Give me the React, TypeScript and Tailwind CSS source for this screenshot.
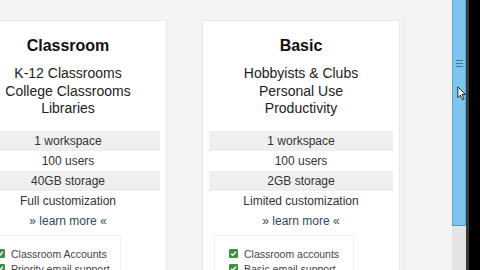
import React from 'react'

interface Plan {
  name: string
  audience: string[]
  features: string[]
  perks: string[]
}

const PLANS: Plan[] = [
  {
    name: 'Classroom',
    audience: ['K-12 Classrooms', 'College Classrooms', 'Libraries'],
    features: ['1 workspace', '100 users', '40GB storage', 'Full customization'],
    perks: ['Classroom Accounts', 'Priority email support'],
  },
  {
    name: 'Basic',
    audience: ['Hobbyists & Clubs', 'Personal Use', 'Productivity'],
    features: ['1 workspace', '100 users', '2GB storage', 'Limited customization'],
    perks: ['Classroom accounts', 'Basic email support'],
  },
]

function Check() {
  return (
    <svg viewBox="0 0 10 10" className="w-[9px] h-[9px] shrink-0">
      <rect x="0" y="0" width="10" height="10" rx="1.5" fill="#3f8f3f" />
      <path d="M2.3 5.2 L4.2 7 L7.8 3" fill="none" stroke="#fff" strokeWidth="1.6" />
    </svg>
  )
}

function PlanCard({ plan }: { plan: Plan }) {
  return (
    <div className="w-[198px] shrink-0 bg-white border border-[#e8e8e8] pt-[14px] px-[6px]">
      <h2 className="text-center text-[16px] leading-[22px] font-bold text-[#111]">{plan.name}</h2>
      <div className="mt-[8px] text-center text-[14px] leading-[17.5px] text-[#222]">
        {plan.audience.map((a) => (
          <div key={a}>{a}</div>
        ))}
      </div>
      <div className="mt-[13px] text-[12px] text-[#333]">
        {plan.features.map((f, i) => (
          <div
            key={f}
            className={`h-[20px] flex items-center justify-center ${i % 2 === 0 ? 'bg-[#efefef]' : ''}`}
          >
            {f}
          </div>
        ))}
        <div className="h-[21px] flex items-center justify-center text-[#34495e]">
          » learn more «
        </div>
      </div>
      <div className="mt-[3px] ml-[5px] w-[140px] border border-[#f1f1f1] pt-[13px] pl-[14px] pb-2 flex flex-col gap-[5px]">
        {plan.perks.map((p) => (
          <div key={p} className="flex items-center gap-[6px] text-[10.5px] leading-[10px] text-[#444]">
            <Check />
            <span>{p}</span>
          </div>
        ))}
      </div>
    </div>
  )
}

export default function App() {
  return (
    <div
      className="w-[480px] h-[270px] overflow-hidden flex bg-[#f4f4f4]"
      style={{ fontFamily: '"Liberation Sans", Arial, sans-serif' }}
    >
      {/* page */}
      <div className="w-[452px] h-full overflow-hidden">
        <div className="flex gap-[35px] ml-[-31px] mt-[20px]">
          {PLANS.map((p) => (
            <PlanCard key={p.name} plan={p} />
          ))}
          <div className="w-[2px] h-[260px] bg-[#ececec] ml-[-32px]" />
        </div>
      </div>

      {/* scrollbar */}
      <div className="relative w-[14px] h-full flex flex-col bg-[#e4e4e4]">
        <div className="h-[226px] bg-[#7cc6ee] border-x border-[#5aa7d6] border-b border-b-[#4f9ccc] flex flex-col items-center pt-[60px] gap-[2px]">
          <div className="w-[7px] h-px bg-[#4c6f8a]" />
          <div className="w-[7px] h-px bg-[#4c6f8a]" />
          <div className="w-[7px] h-px bg-[#4c6f8a]" />
        </div>
        <svg viewBox="0 0 12 18" className="absolute left-[5px] top-[86px] w-[10px] h-[15px]">
          <path d="M1 1 L1 14 L4 11 L6.5 16.5 L8.5 15.5 L6 10.2 L10 10.2 Z" fill="#fff" stroke="#000" strokeWidth="1" />
        </svg>
      </div>
      <div className="w-[3px] h-full bg-[#3a3a3a]" />
      <div className="flex-1 h-full bg-black" />
    </div>
  )
}
